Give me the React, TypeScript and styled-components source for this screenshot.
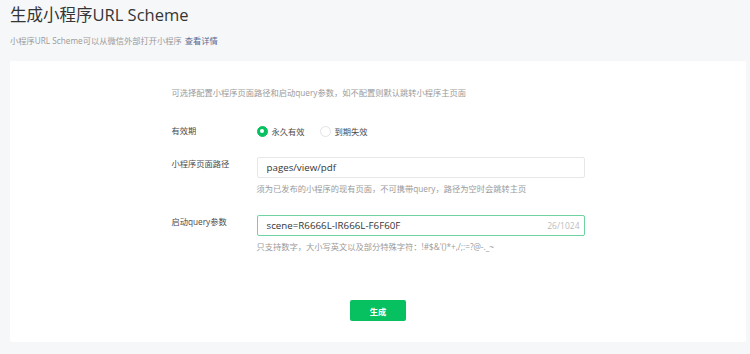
import styled, { createGlobalStyle } from "styled-components";

const GlobalStyle = createGlobalStyle`
  html, body {
    margin: 0;
    padding: 0;
    background: #f6f7f9;
    font-family: "Open Sans", "Noto Sans CJK SC", sans-serif;
  }
`;

const Page = styled.div`
  width: 750px;
  height: 354px;
  box-sizing: border-box;
  padding: 4px 4px 0 10px;
  overflow: hidden;
`;

const Title = styled.h1`
  margin: 0;
  font-size: 16.5px;
  line-height: 22px;
  font-weight: 400;
  color: #353535;
`;

const Sub = styled.p`
  margin: 9px 0 0;
  font-size: 8.25px;
  line-height: 12px;
  color: #9a9a9a;

  a {
    color: #576b95;
    text-decoration: none;
    margin-left: 3px;
  }
`;

const Card = styled.div`
  margin-top: 14px;
  height: 281px;
  box-sizing: border-box;
  background: #fff;
  border-radius: 2px;
  padding-top: 26px;
`;

const Form = styled.div`
  width: 413px;
  margin: 0 auto;
  display: flex;
  flex-direction: column;
`;

const Desc = styled.p`
  margin: 0 0 26px;
  font-size: 8.25px;
  line-height: 12px;
  color: #9a9a9a;
`;

const Row = styled.div<{ $gap?: number }>`
  display: grid;
  grid-template-columns: 85px 328px;
  align-items: start;
  margin-bottom: ${(p) => p.$gap ?? 20}px;
`;

const Label = styled.div<{ $top?: number }>`
  font-size: 8.25px;
  line-height: 12px;
  color: #4a4a4a;
  padding-top: ${(p) => p.$top ?? 0}px;
`;

const Radios = styled.div`
  display: flex;
  align-items: center;
  gap: 15px;
  height: 12px;
`;

const RadioItem = styled.label`
  display: flex;
  align-items: center;
  gap: 4px;
  font-size: 8.25px;
  color: #4a4a4a;
`;

const Dot = styled.span<{ $on?: boolean }>`
  width: 11px;
  height: 11px;
  box-sizing: border-box;
  border-radius: 50%;
  border: 1px solid ${(p) => (p.$on ? "#07c160" : "#e3e3e3")};
  background: ${(p) => (p.$on ? "#07c160" : "#fff")};
  display: flex;
  align-items: center;
  justify-content: center;

  &::after {
    content: "";
    display: ${(p) => (p.$on ? "block" : "none")};
    width: 4px;
    height: 4px;
    border-radius: 50%;
    background: #fff;
  }
`;

const Field = styled.div<{ $focus?: boolean }>`
  height: 21px;
  box-sizing: border-box;
  border: 1px solid ${(p) => (p.$focus ? "#6ed3a0" : "#e7e7e7")};
  border-radius: 2px;
  display: flex;
  align-items: center;
  padding: 0 4px 0 9px;
  font-size: 9.75px;
  color: #353535;
`;

const Value = styled.span`
  flex: 1;
`;

const Count = styled.span`
  font-size: 8.5px;
  color: #bdbdbd;
`;

const Hint = styled.div`
  margin-top: 5px;
  font-size: 8.25px;
  line-height: 12px;
  color: #9a9a9a;
`;

const Actions = styled.div`
  display: flex;
  justify-content: center;
  margin-top: 47px;
`;

const Button = styled.button`
  width: 56px;
  height: 21px;
  border: none;
  border-radius: 2px;
  background: #07c160;
  color: #fff;
  font-family: inherit;
  font-size: 8.25px;
  font-weight: 600;
  padding: 0;
`;

export default function App() {
  return (
    <Page>
      <GlobalStyle />
      <Title>生成小程序URL Scheme</Title>
      <Sub>
        小程序URL Scheme可以从微信外部打开小程序<a href="#">查看详情</a>
      </Sub>
      <Card>
        <Form>
          <Desc>可选择配置小程序页面路径和启动query参数，如不配置则默认跳转小程序主页面</Desc>
          <Row>
            <Label>有效期</Label>
            <Radios>
              <RadioItem>
                <Dot $on />
                永久有效
              </RadioItem>
              <RadioItem>
                <Dot />
                到期失效
              </RadioItem>
            </Radios>
          </Row>
          <Row>
            <Label $top={1}>小程序页面路径</Label>
            <div>
              <Field>
                <Value>pages/view/pdf</Value>
              </Field>
              <Hint>须为已发布的小程序的现有页面，不可携带query，路径为空时会跳转主页</Hint>
            </div>
          </Row>
          <Row $gap={0}>
            <Label $top={1}>启动query参数</Label>
            <div>
              <Field $focus>
                <Value>scene=R6666L-IR666L-F6F60F</Value>
                <Count>26/1024</Count>
              </Field>
              <Hint>只支持数字，大小写英文以及部分特殊字符：!#$&amp;'()*+,/;:=?@-._~</Hint>
            </div>
          </Row>
          <Actions>
            <Button>生成</Button>
          </Actions>
        </Form>
      </Card>
    </Page>
  );
}
